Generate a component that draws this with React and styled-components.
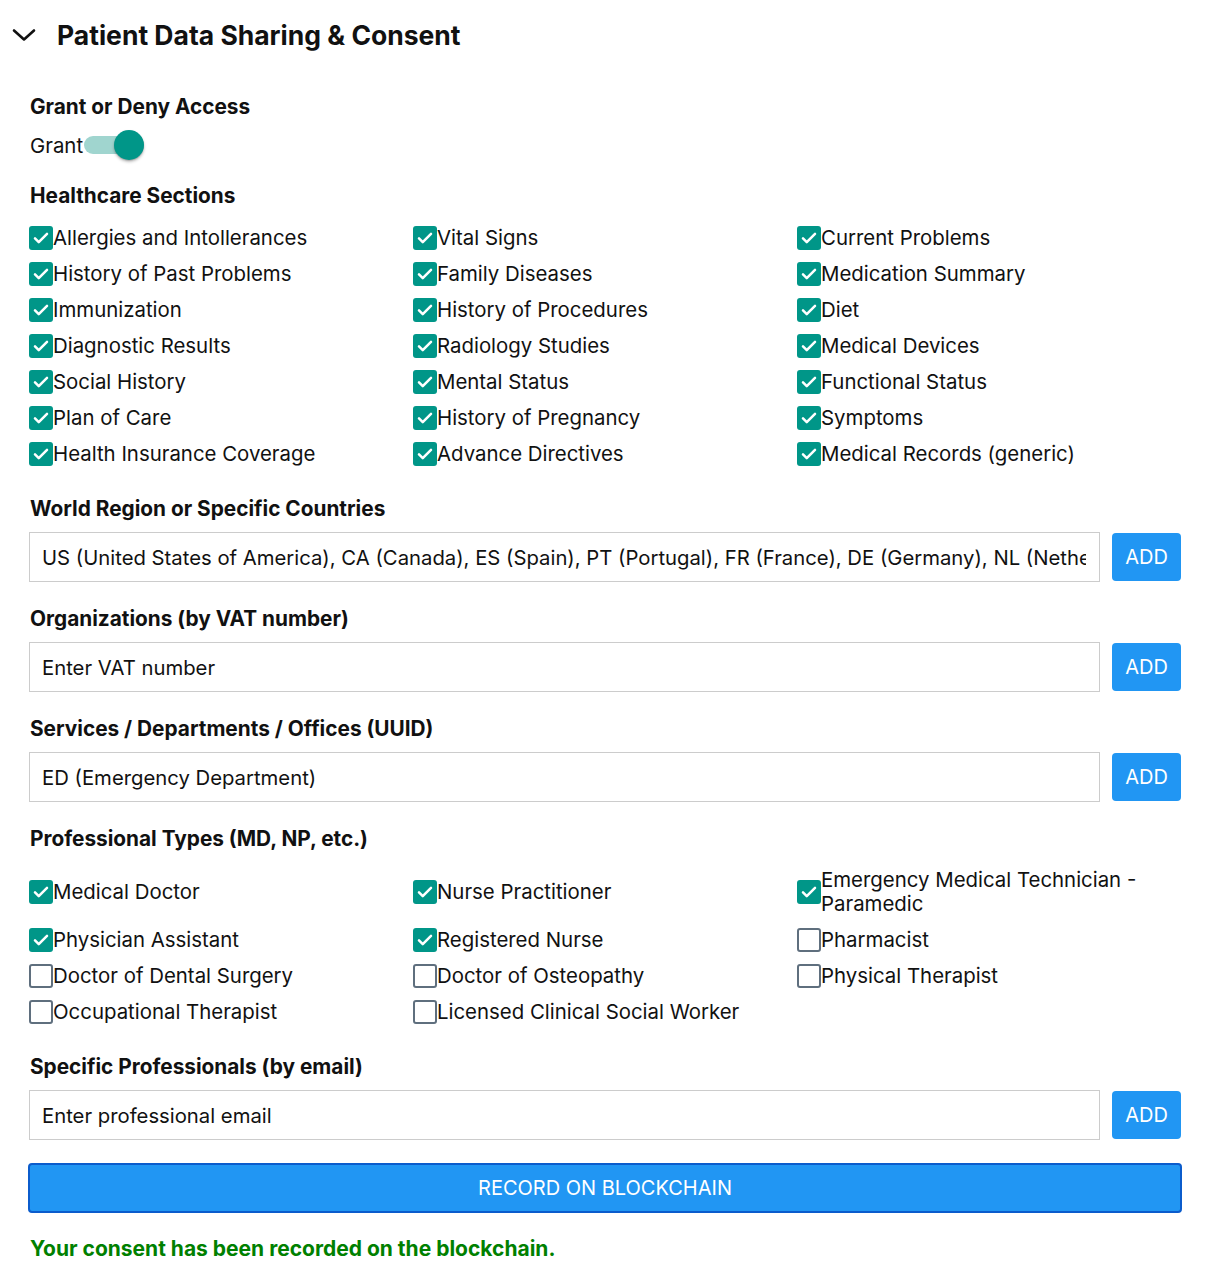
import React, { useState } from 'react';
import styled, { createGlobalStyle } from 'styled-components';

const GlobalStyle = createGlobalStyle`
  body {
    margin: 0;
    background: #fff;
    color: #111;
    font-family: Inter, "Noto Sans", sans-serif;
  }
  * { box-sizing: border-box; }
`;

const Page = styled.div`
  width: 1212px;
  padding: 20px 30px 8px 30px;
`;

const Header = styled.div`
  display: flex;
  align-items: center;
  gap: 21px;
  margin-left: -18px;
  height: 30px;
`;

const Chevron = styled.svg`
  width: 24px;
  height: 24px;
  flex: none;
`;

const Title = styled.h2`
  margin: 0;
  font-size: 26.5px;
  font-weight: 700;
  line-height: 30px;
`;

const Section = styled.div`
  margin-top: ${p => p.$top ?? 25}px;
`;

const Label = styled.div`
  font-size: 20.8px;
  font-weight: 700;
  line-height: 24px;
  margin-bottom: ${p => p.$gap ?? 11}px;
`;

const SwitchRow = styled.label`
  display: flex;
  align-items: center;
  height: 30px;
  font-size: 20.4px;
  cursor: pointer;
`;

const Track = styled.span`
  position: relative;
  display: inline-block;
  width: 60px;
  height: 18px;
  margin-left: 1px;
  border-radius: 9px;
  background: ${p => (p.$on ? '#a0d5cf' : '#bdbdbd')};
`;

const Thumb = styled.span`
  position: absolute;
  top: -6px;
  left: ${p => (p.$on ? '30px' : '0')};
  width: 30px;
  height: 30px;
  border-radius: 50%;
  background: ${p => (p.$on ? '#009688' : '#fafafa')};
  box-shadow: 0 2px 3px rgba(0, 0, 0, 0.25), 0 1px 1px rgba(0, 0, 0, 0.14);
`;

const CheckGrid = styled.div`
  display: grid;
  grid-template-columns: repeat(3, 384px);
  margin-left: -1px;
`;

const CheckItem = styled.label`
  display: flex;
  align-items: center;
  padding: 6px 0;
  font-size: 20.4px;
  line-height: 24px;
  cursor: pointer;
`;

const Box = styled.span`
  flex: none;
  width: 24px;
  height: 24px;
  border-radius: 3px;
  display: flex;
  align-items: center;
  justify-content: center;
  background: ${p => (p.$checked ? '#009688' : '#fff')};
  border: ${p => (p.$checked ? 'none' : '2.5px solid #5f6f7e')};
`;

const ItemText = styled.span`
  max-width: 330px;
`;

const InputRow = styled.div`
  display: flex;
  align-items: center;
  gap: 12px;
`;

const TextInput = styled.input`
  width: 1071px;
  height: 50px;
  margin-left: -1px;
  padding: 0 13px 0 12px;
  border: 1px solid #cccccc;
  border-radius: 0;
  font-family: Inter, "Noto Sans", sans-serif;
  font-size: 20.3px;
  color: #111;
  outline: none;

  &::placeholder {
    color: #111;
  }
`;

const AddButton = styled.button`
  width: 69px;
  height: 48px;
  border: none;
  border-radius: 4px;
  background: #2196f3;
  color: #fff;
  font-family: Inter, "Noto Sans", sans-serif;
  font-size: 20px;
  cursor: pointer;
`;

const RecordButton = styled.button`
  display: block;
  width: 1154px;
  height: 50px;
  margin: 23px 0 0 -2px;
  border: 2px solid #0b5ccc;
  border-radius: 4px;
  background: #2196f3;
  color: #fff;
  font-family: Inter, "Noto Sans", sans-serif;
  font-size: 20px;
  cursor: pointer;
`;

const Success = styled.p`
  margin: 24px 0 0;
  color: #008000;
  font-family: Inter, "Noto Sans", sans-serif;
  font-weight: 700;
  font-size: 21px;
  line-height: 24px;
`;

const sections = [
  'Allergies and Intollerances', 'Vital Signs', 'Current Problems',
  'History of Past Problems', 'Family Diseases', 'Medication Summary',
  'Immunization', 'History of Procedures', 'Diet',
  'Diagnostic Results', 'Radiology Studies', 'Medical Devices',
  'Social History', 'Mental Status', 'Functional Status',
  'Plan of Care', 'History of Pregnancy', 'Symptoms',
  'Health Insurance Coverage', 'Advance Directives', 'Medical Records (generic)',
];

const professionals = [
  ['Medical Doctor', true], ['Nurse Practitioner', true], ['Emergency Medical Technician - Paramedic', true],
  ['Physician Assistant', true], ['Registered Nurse', true], ['Pharmacist', false],
  ['Doctor of Dental Surgery', false], ['Doctor of Osteopathy', false], ['Physical Therapist', false],
  ['Occupational Therapist', false], ['Licensed Clinical Social Worker', false],
];

function Checkbox({ label, checked }) {
  return (
    <CheckItem>
      <Box $checked={checked}>
        {checked && (
          <svg width="18" height="18" viewBox="0 0 24 24">
            <path d="M4 12.5l5 5L20 6.5" fill="none" stroke="#fff" strokeWidth="3.4" strokeLinecap="round" strokeLinejoin="round" />
          </svg>
        )}
      </Box>
      <ItemText>{label}</ItemText>
    </CheckItem>
  );
}

function AddField({ label, value, placeholder }) {
  return (
    <Section>
      <Label>{label}</Label>
      <InputRow>
        <TextInput defaultValue={value} placeholder={placeholder} />
        <AddButton>ADD</AddButton>
      </InputRow>
    </Section>
  );
}

export default function App() {
  const [grant, setGrant] = useState(true);

  return (
    <Page>
      <GlobalStyle />
      <Header>
        <Chevron viewBox="0 0 24 24">
          <path d="M2 7.5l10 9 10-9" fill="none" stroke="#111" strokeWidth="2.6" strokeLinecap="round" strokeLinejoin="round" />
        </Chevron>
        <Title>Patient Data Sharing &amp; Consent</Title>
      </Header>

      <Section $top={45}>
        <Label>Grant or Deny Access</Label>
        <SwitchRow onClick={() => setGrant(g => !g)}>
          {grant ? 'Grant' : 'Deny'}
          <Track $on={grant}>
            <Thumb $on={grant} />
          </Track>
        </SwitchRow>
      </Section>

      <Section $top={24}>
        <Label $gap={12}>Healthcare Sections</Label>
        <CheckGrid>
          {sections.map(s => (
            <Checkbox key={s} label={s} checked />
          ))}
        </CheckGrid>
      </Section>

      <AddField
        label="World Region or Specific Countries"
        value="US (United States of America), CA (Canada), ES (Spain), PT (Portugal), FR (France), DE (Germany), NL (Netherlands)"
      />
      <AddField label="Organizations (by VAT number)" placeholder="Enter VAT number" />
      <AddField label="Services / Departments / Offices (UUID)" value="ED (Emergency Department)" />

      <Section>
        <Label $gap={11}>Professional Types (MD, NP, etc.)</Label>
        <CheckGrid>
          {professionals.map(([p, c]) => (
            <Checkbox key={p} label={p} checked={c} />
          ))}
        </CheckGrid>
      </Section>

      <AddField label="Specific Professionals (by email)" placeholder="Enter professional email" />

      <RecordButton>RECORD ON BLOCKCHAIN</RecordButton>
      <Success>Your consent has been recorded on the blockchain.</Success>
    </Page>
  );
}
